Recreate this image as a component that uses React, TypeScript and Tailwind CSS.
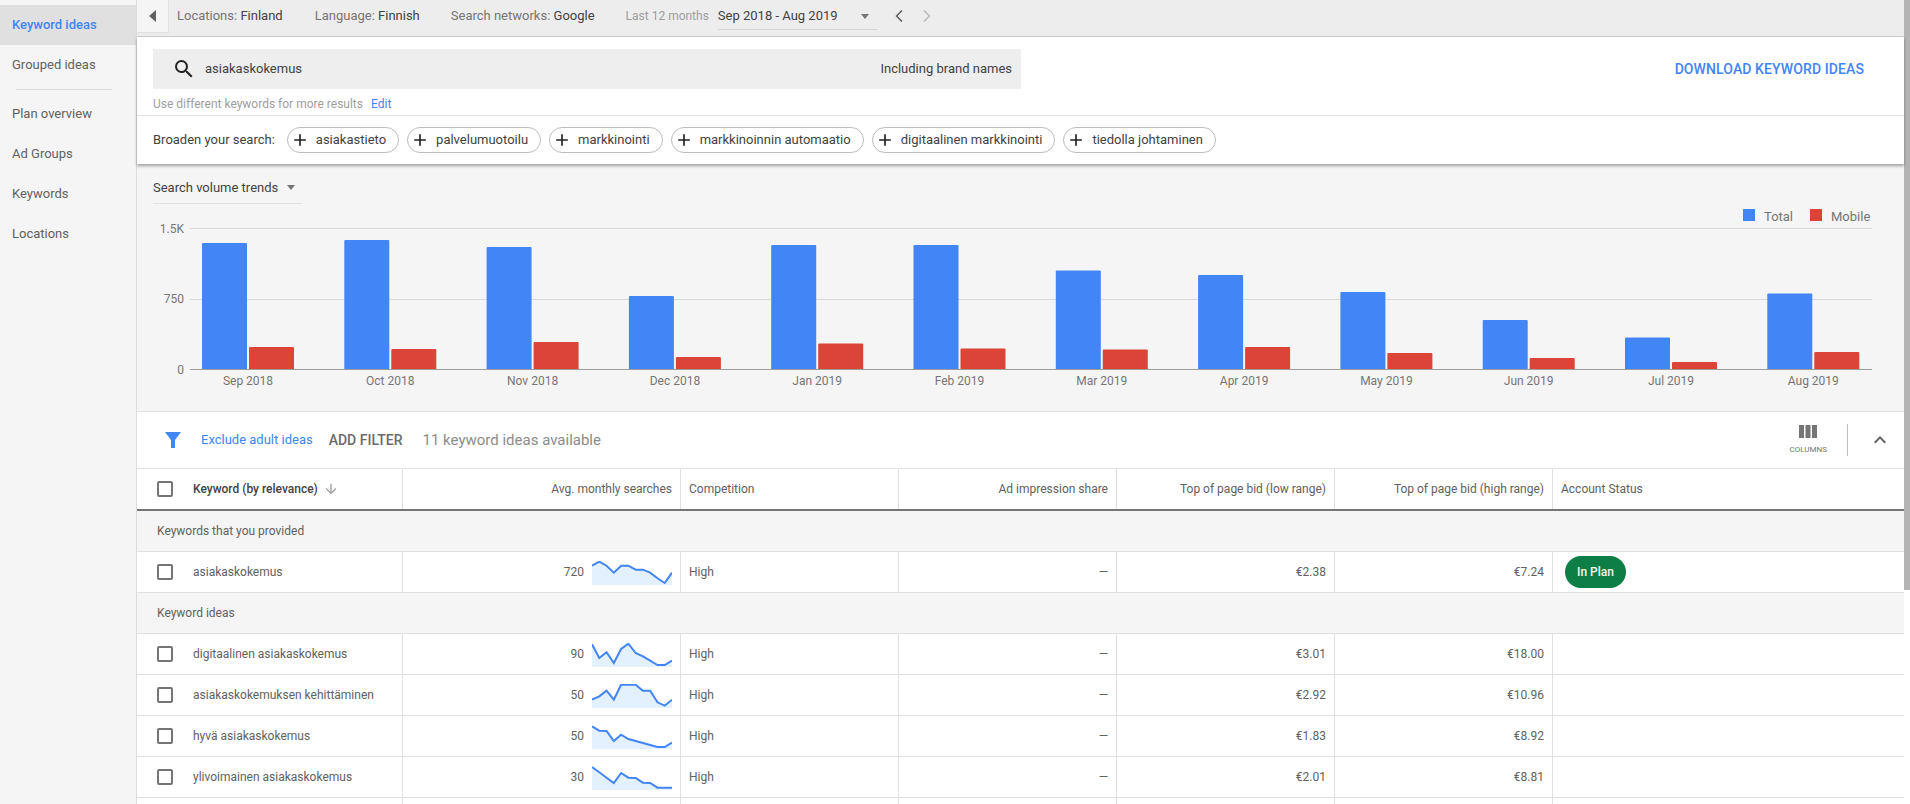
import { MdAdd, MdArrowDownward, MdExpandLess, MdSearch } from 'react-icons/md'
import { ChevronLeft, ChevronRight } from 'lucide-react'

const navItems = ['Plan overview', 'Ad Groups', 'Keywords', 'Locations']
const chips = [
  'asiakastieto',
  'palvelumuotoilu',
  'markkinointi',
  'markkinoinnin automaatio',
  'digitaalinen markkinointi',
  'tiedolla johtaminen',
]

// top edge of every bar, in page pixels (baseline sits at 369.5)
const months = [
  { label: 'Sep 2018', total: 243, mobile: 347 },
  { label: 'Oct 2018', total: 240, mobile: 349 },
  { label: 'Nov 2018', total: 247, mobile: 342 },
  { label: 'Dec 2018', total: 296, mobile: 357 },
  { label: 'Jan 2019', total: 245, mobile: 343.5 },
  { label: 'Feb 2019', total: 245, mobile: 348.5 },
  { label: 'Mar 2019', total: 270.5, mobile: 349.5 },
  { label: 'Apr 2019', total: 275, mobile: 347 },
  { label: 'May 2019', total: 292, mobile: 353 },
  { label: 'Jun 2019', total: 320, mobile: 358 },
  { label: 'Jul 2019', total: 337.5, mobile: 362 },
  { label: 'Aug 2019', total: 293.5, mobile: 352 },
]

const provided = [
  {
    keyword: 'asiakaskokemus',
    searches: '720',
    low: '€2.38',
    high: '€7.24',
    trend: [4.7, 0.7, 4.7, 11.7, 4.7, 4.7, 8.7, 8.7, 11.7, 17.3, 22, 11.7],
    inPlan: true,
  },
]

const ideas = [
  {
    keyword: 'digitaalinen asiakaskokemus',
    searches: '90',
    low: '€3.01',
    high: '€18.00',
    trend: [1.3, 15, 9.3, 20, 6, 0.7, 10, 13.3, 17.7, 22, 22, 17.7],
  },
  {
    keyword: 'asiakaskokemuksen kehittäminen',
    searches: '50',
    low: '€2.92',
    high: '€10.96',
    trend: [15.7, 12.3, 6.7, 15.7, 0.7, 0.7, 0.7, 6.7, 6.7, 18.3, 21.7, 15.7],
  },
  {
    keyword: 'hyvä asiakaskokemus',
    searches: '50',
    low: '€1.83',
    high: '€8.92',
    trend: [1.3, 5.7, 6, 16, 9.7, 14, 16, 18, 20, 22, 22, 17.7],
  },
  {
    keyword: 'ylivoimainen asiakaskokemus',
    searches: '30',
    low: '€2.01',
    high: '€8.81',
    trend: [1, 6.3, 11.7, 17, 7, 11.7, 12, 16.7, 17, 21.7, 21.7, 21.7],
  },
]

const gridCols = 'grid grid-cols-[266px_278px_218px_218px_218px_218px_1fr]'

function Caret() {
  return (
    <svg width="8" height="5" viewBox="0 0 8 5" className="shrink-0">
      <polygon points="0,0 8,0 4,5" fill="#757575" />
    </svg>
  )
}

function Checkbox() {
  return <span className="block size-4 shrink-0 rounded-[2px] border-2 border-[#757575]" />
}

function Sparkline({ points }: { points: number[] }) {
  const line = points.map((y, i) => `${(i * 80) / 11},${y}`).join(' ')
  return (
    <svg width="80" height="24" viewBox="0 0 80 24" className="mt-[2px] shrink-0">
      <polygon points={`0,24 ${line} 80,24`} fill="#e3f0fd" />
      <polyline points={line} fill="none" stroke="#4285f4" strokeWidth="2" />
    </svg>
  )
}

function VolumeChart() {
  return (
    <svg width="1767" height="207" viewBox="137 204 1767 207" className="block">
      <line x1="190" x2="1872" y1="228.5" y2="228.5" stroke="#d9d9d9" />
      <line x1="190" x2="1872" y1="299.5" y2="299.5" stroke="#d9d9d9" />
      <g fontSize="12" fill="#757575" textAnchor="end">
        <text x="184" y="233">1.5K</text>
        <text x="184" y="303">750</text>
        <text x="184" y="374">0</text>
      </g>
      {months.map((m, i) => {
        const x = 202 + i * 142.3
        return (
          <g key={m.label}>
            <rect x={x} y={m.total} width="45" height={370 - m.total} rx="1" fill="#4285f4" />
            <rect x={x + 47} y={m.mobile} width="45" height={370 - m.mobile} rx="1" fill="#db4437" />
            <text x={x + 46} y="385" fontSize="12" fill="#757575" textAnchor="middle">
              {m.label}
            </text>
          </g>
        )
      })}
      <line x1="190" x2="1872" y1="369.5" y2="369.5" stroke="#9e9e9e" />
      <rect x="1743" y="209" width="12" height="12" fill="#4285f4" />
      <text x="1764" y="221" fontSize="13" fill="#757575">Total</text>
      <rect x="1810" y="209" width="12" height="12" fill="#db4437" />
      <text x="1831" y="221" fontSize="13" fill="#757575">Mobile</text>
    </svg>
  )
}

type Idea = {
  keyword: string
  searches: string
  low: string
  high: string
  trend: number[]
  inPlan?: boolean
}

function KeywordRow({ row }: { row: Idea }) {
  const cell = 'flex items-center border-r border-[#e0e0e0]'
  return (
    <div className={`${gridCols} h-[41px] border-b border-[#e0e0e0] text-xs text-[#616161]`}>
      <div className={`${cell} gap-5 pl-5`}>
        <Checkbox />
        <span>{row.keyword}</span>
      </div>
      <div className={`${cell} justify-end gap-2 pr-2`}>
        <span>{row.searches}</span>
        <Sparkline points={row.trend} />
      </div>
      <div className={`${cell} pl-2`}>High</div>
      <div className={`${cell} justify-end pr-2`}>—</div>
      <div className={`${cell} justify-end pr-2`}>{row.low}</div>
      <div className={`${cell} justify-end pr-2`}>{row.high}</div>
      <div className="flex items-center pl-3">
        {row.inPlan && (
          <span className="flex h-8 w-[61px] items-center justify-center rounded-full bg-[#0d7f46] font-medium text-[#f0f7f3]">
            In Plan
          </span>
        )}
      </div>
    </div>
  )
}

function GroupRow({ title }: { title: string }) {
  return (
    <div className="flex h-[41px] items-center border-b border-[#e0e0e0] bg-[#f5f5f5] pl-5 text-xs text-[#616161]">
      {title}
    </div>
  )
}

function EmptyRow() {
  const cell = 'border-r border-[#e0e0e0]'
  return (
    <div className={`${gridCols} h-[41px]`}>
      <div className={cell} />
      <div className={cell} />
      <div className={cell} />
      <div className={cell} />
      <div className={cell} />
      <div className={cell} />
    </div>
  )
}

export default function App() {
  const headCell = 'flex items-center border-r border-[#e0e0e0]'
  return (
    <div className="flex h-screen w-full overflow-hidden bg-white font-['Roboto',sans-serif] text-[13px]">
      <aside className="w-[137px] shrink-0 border-r border-[#dddddd] bg-[#f5f5f5] pt-[5px] text-[#616161]">
        <div className="flex h-10 items-center bg-[#e0e0e0] pl-3 font-medium text-[#4285f4]">Keyword ideas</div>
        <div className="flex h-10 items-center pl-3">Grouped ideas</div>
        <div className="mx-4 mt-1 mb-0 h-px w-24 bg-[#dddddd]" />
        <div className="pt-1">
          {navItems.map((item) => (
            <div key={item} className="flex h-10 items-center pl-3">
              {item}
            </div>
          ))}
        </div>
      </aside>

      <main className="min-w-0 flex-1">
        <div className="flex h-[37px] border-b border-[#cfcfcf] bg-[#ededed] text-[#757575]">
          <div className="flex h-[33px] w-8 items-center justify-center border-r border-b border-[#e0e0e0] bg-[#f5f5f5]">
            <svg width="7" height="12" viewBox="0 0 7 12">
              <polygon points="7,0 7,12 0,6" fill="#616161" />
            </svg>
          </div>
          <div className="ml-2 flex h-8 items-center gap-[31px]">
            <span>
              Locations: <span className="text-[#424242]">Finland</span>
            </span>
            <span className="ml-px">
              Language: <span className="text-[#424242]">Finnish</span>
            </span>
            <span>
              Search networks: <span className="text-[#424242]">Google</span>
            </span>
            <div className="flex items-center gap-[9px]">
              <span className="text-xs text-[#9e9e9e]">Last 12 months</span>
              <div className="flex h-[27px] w-[159px] items-center justify-between border-b border-[#d5d5d5] pr-2 pt-[1px] text-[#424242]">
                <span>Sep 2018 - Aug 2019</span>
                <Caret />
              </div>
            </div>
          </div>
          <div className="ml-3 flex h-8 items-center gap-[8px]">
            <ChevronLeft size={20} className="text-[#616161]" />
            <ChevronRight size={20} className="text-[#bdbdbd]" />
          </div>
        </div>

        <section className="relative z-10 bg-white shadow-[0_2px_3px_rgba(0,0,0,0.35)]">
          <div className="flex items-center justify-between pt-3 pl-4 pr-10">
            <div className="flex h-10 w-[868px] items-center bg-[#eeeeee] pl-[19px] pr-[9px] text-[#424242]">
              <MdSearch size={24} className="text-[#212121]" />
              <span className="ml-[9px]">asiakaskokemus</span>
              <span className="ml-auto">Including brand names</span>
            </div>
            <span className="text-sm font-medium tracking-[0.1px] text-[#4285f4] uppercase">
              Download keyword ideas
            </span>
          </div>
          <div className="flex h-[27px] items-center gap-2 border-b border-[#e0e0e0] pt-1 pl-4 text-xs text-[#9e9e9e]">
            Use different keywords for more results
            <span className="text-[#4285f4]">Edit</span>
          </div>
          <div className="flex h-12 items-center pl-4 text-[#424242]">
            <span className="mr-3">Broaden your search:</span>
            <div className="flex gap-2">
              {chips.map((chip) => (
                <div
                  key={chip}
                  className="flex h-[26px] items-center gap-[6px] rounded-full border border-[#bdbdbd] pr-3 pl-[2px]"
                >
                  <MdAdd size={20} className="text-[#212121]" />
                  {chip}
                </div>
              ))}
            </div>
          </div>
        </section>

        <section className="h-[247px] bg-[#f5f5f5]">
          <div className="pt-[13px] pl-4">
            <div className="flex h-[27px] w-[149px] items-center gap-[9px] border-b border-[#e0e0e0] pb-[5px] text-[#424242]">
              Search volume trends
              <Caret />
            </div>
          </div>
          <VolumeChart />
        </section>

        <div className="flex h-[58px] items-center border-y border-[#e0e0e0] bg-white">
          <svg width="16" height="16" viewBox="0 0 16 16" className="ml-[28px]">
            <polygon points="0,0 16,0 10,8 10,16 6,16 6,8" fill="#4285f4" />
          </svg>
          <span className="ml-5 text-[#4285f4]">Exclude adult ideas</span>
          <span className="ml-4 text-sm font-medium text-[#6b6b6b]">ADD FILTER</span>
          <span className="ml-5 text-[15px] text-[#8c8c8c]">11 keyword ideas available</span>
          <div className="ml-auto flex items-center">
            <div className="flex flex-col items-center gap-[7px]">
              <svg width="18" height="13" viewBox="0 0 18 13">
                <rect x="0" width="5" height="13" fill="#757575" />
                <rect x="6.5" width="5" height="13" fill="#757575" />
                <rect x="13" width="5" height="13" fill="#757575" />
              </svg>
              <span className="text-[8px] leading-[10px] text-[#757575]">COLUMNS</span>
            </div>
            <div className="mx-5 h-8 w-px bg-[#bdbdbd]" />
            <MdExpandLess size={24} className="mr-3 text-[#616161]" />
          </div>
        </div>

        <div className={`${gridCols} h-[42px] border-b-2 border-[#757575] text-xs text-[#616161]`}>
          <div className={`${headCell} gap-5 pl-5`}>
            <Checkbox />
            <span className="flex items-center gap-[5px] font-medium text-[#424242]">
              Keyword (by relevance)
              <MdArrowDownward size={16} className="text-[#9e9e9e]" />
            </span>
          </div>
          <div className={`${headCell} justify-end pr-2`}>Avg. monthly searches</div>
          <div className={`${headCell} pl-2`}>Competition</div>
          <div className={`${headCell} justify-end pr-2`}>Ad impression share</div>
          <div className={`${headCell} justify-end pr-2`}>Top of page bid (low range)</div>
          <div className={`${headCell} justify-end pr-2`}>Top of page bid (high range)</div>
          <div className="flex items-center pl-2">Account Status</div>
        </div>

        <GroupRow title="Keywords that you provided" />
        {provided.map((row) => (
          <KeywordRow key={row.keyword} row={row} />
        ))}
        <GroupRow title="Keyword ideas" />
        {ideas.map((row) => (
          <KeywordRow key={row.keyword} row={row} />
        ))}
        <EmptyRow />
      </main>

      <div className="w-[6px] shrink-0">
        <div className="h-[590px] bg-[#b4b4b4]" />
      </div>
    </div>
  )
}
